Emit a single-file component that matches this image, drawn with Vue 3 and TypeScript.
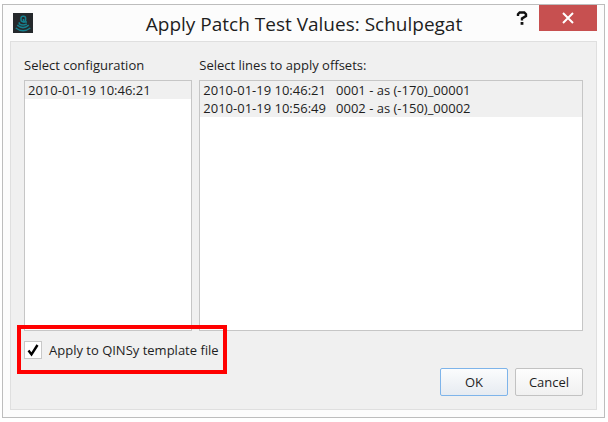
<script setup lang="ts">
import { ref } from 'vue'

interface SurveyLine {
  id: string
  recorded: string
  name: string
}

const title = 'Apply Patch Test Values: Schulpegat'

const configurations: string[] = ['2010-01-19 10:46:21']
const lines: SurveyLine[] = [
  { id: '0001', recorded: '2010-01-19 10:46:21', name: '0001 - as (-170)_00001' },
  { id: '0002', recorded: '2010-01-19 10:56:49', name: '0002 - as (-150)_00002' },
]

const selectedConfigurations = ref<string[]>([configurations[0]])
const selectedLines = ref<string[]>(lines.map((line) => line.id))
const applyToTemplate = ref(true)

const lineLabel = (line: SurveyLine): string => `${line.recorded}\u00a0\u00a0\u00a0${line.name}`
</script>

<template>
  <main class="dialog" role="dialog" aria-labelledby="dialog-title">
    <header class="titlebar">
      <svg class="logo" viewBox="0 0 20 20" aria-hidden="true">
        <rect width="20" height="20" fill="#25292c" />
        <g fill="none" stroke="#15808f" stroke-width="1.5">
          <rect x="8" y="3.2" width="4.6" height="5.6" rx="2" />
          <path d="M10.5 6v3H14" />
          <path d="M6.3 9.2V10.8Q10 13.4 13.8 10.8" />
          <path d="M4.2 12.2Q10 17 15.8 12.2" />
          <path d="M2.8 15Q10 20.5 17.3 15" />
        </g>
      </svg>
      <h1 id="dialog-title" class="title">{{ title }}</h1>
      <button class="help" type="button" aria-label="Help">
        <svg viewBox="0 0 12 14" width="12" height="14" aria-hidden="true">
          <path d="M2 5V3.2L3.7 1.5H8.3L10 3.2V5L6 7.5V9.5" fill="none" stroke="#111" stroke-width="2.4" />
          <rect x="4.6" y="11" width="2.8" height="2.8" fill="#111" />
        </svg>
      </button>
      <button class="close" type="button" aria-label="Close">
        <svg viewBox="0 0 12 12" width="12" height="12" aria-hidden="true">
          <path d="M1 1L11 11M11 1L1 11" fill="none" stroke="#fff" stroke-width="2" />
        </svg>
      </button>
    </header>

    <form class="client" @submit.prevent>
      <div class="lists">
        <div class="field">
          <label for="configurations">Select configuration</label>
          <select id="configurations" v-model="selectedConfigurations" class="list" multiple>
            <option v-for="item in configurations" :key="item" :value="item">{{ item }}</option>
          </select>
        </div>
        <div class="field">
          <label for="lines">Select lines to apply offsets:</label>
          <select id="lines" v-model="selectedLines" class="list" multiple>
            <option v-for="line in lines" :key="line.id" :value="line.id">{{ lineLabel(line) }}</option>
          </select>
        </div>
      </div>

      <label class="template-option">
        <span class="check">
          <input v-model="applyToTemplate" type="checkbox" />
          <svg v-if="applyToTemplate" viewBox="0 0 18 18" aria-hidden="true">
            <path d="M4.5 9.5L7.5 13.5L13.5 4" fill="none" stroke="#000" stroke-width="2.4" />
          </svg>
        </span>
        Apply to QINSy template file
      </label>

      <div class="actions">
        <button class="button primary" type="submit">OK</button>
        <button class="button" type="button">Cancel</button>
      </div>
    </form>
  </main>
</template>

<style>
body {
  background: #fff;
}
</style>

<style scoped>
* {
  box-sizing: border-box;
}

.dialog {
  display: flex;
  flex-direction: column;
  height: calc(100vh - 8px);
  min-height: 280px;
  margin: 4px 3px 4px 2px;
  padding: 0 7px 7px;
  border: 1px solid #bdbdbd;
  background: #fcfcfc;
  color: #1e1e1e;
  font: 13px/18px "Open Sans", "Noto Sans", sans-serif;
}

.titlebar {
  display: flex;
  align-items: flex-start;
  height: 36px;
}

.logo {
  width: 20px;
  height: 20px;
  margin: 8px 0 0 3px;
}

.title {
  flex: 1;
  margin: 4px 0 0;
  padding-left: 70px;
  font-size: 19px;
  font-weight: 400;
  line-height: 30px;
  text-align: center;
  white-space: nowrap;
}

.help,
.close {
  display: flex;
  justify-content: center;
  padding: 0;
  border: 0;
  background: transparent;
}

.help {
  width: 34px;
  padding-top: 6px;
}

.close {
  align-items: center;
  width: 58px;
  height: 26px;
  background: #c75050;
}

.client {
  display: flex;
  flex: 1;
  flex-direction: column;
  min-height: 0;
  padding: 14px 13px 13px;
  border: 1px solid #dfdfdf;
  background: #f0f0f0;
}

.lists {
  display: grid;
  flex: 1;
  grid-template-columns: 168fr 383fr;
  gap: 7px;
  min-height: 0;
}

.field {
  display: flex;
  flex-direction: column;
  gap: 6px;
  min-width: 0;
}

.list {
  flex: 1;
  width: 100%;
  min-height: 0;
  padding: 0;
  overflow: auto;
  border: 1px solid #c6c6c6;
  border-radius: 0;
  outline: 0;
  background: #fff;
  color: #1e1e1e;
  font: inherit;
}

.list option {
  min-height: 18px;
  padding: 0 3px;
  line-height: 18px;
}

.list option:checked {
  background: #f0f0f0 linear-gradient(#f0f0f0, #f0f0f0);
  color: #1e1e1e;
}

.template-option {
  position: relative;
  display: flex;
  align-items: center;
  align-self: flex-start;
  gap: 7px;
  margin-top: 10px;
}

/* Red frame that calls attention to the template option. */
.template-option::after {
  position: absolute;
  inset: -16px -8px -15px -7px;
  border: 4px solid #f00;
  content: "";
  pointer-events: none;
}

.check {
  display: grid;
  width: 18px;
  height: 18px;
}

.check > * {
  grid-area: 1 / 1;
  width: 18px;
  height: 18px;
  margin: 0;
}

.check input {
  border: 1px solid #c8c8c8;
  appearance: none;
  background: #fff;
}

.check svg {
  pointer-events: none;
}

.actions {
  display: flex;
  justify-content: flex-end;
  gap: 7px;
  margin-top: 9px;
}

.button {
  width: 68px;
  height: 28px;
  padding: 0;
  border: 1px solid #c2c2c2;
  border-radius: 2px;
  background: linear-gradient(#fdfdfd, #f0f0f0);
  color: #1e1e1e;
  font: inherit;
}

.primary {
  border-color: #7eb4ea;
  background: linear-gradient(#fbfcfd, #e6ebf1);
}
</style>
